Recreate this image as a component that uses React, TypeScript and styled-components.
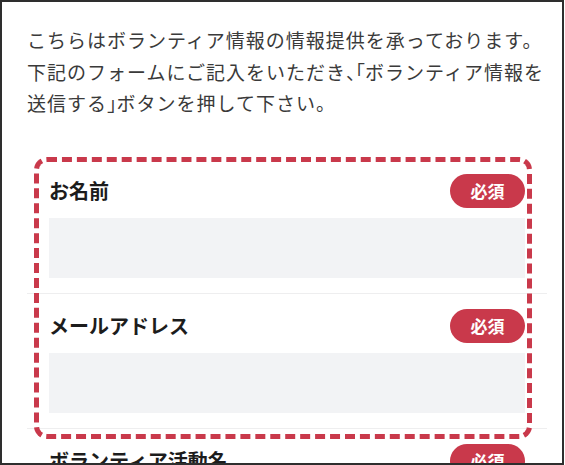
import React from 'react';
import styled, { createGlobalStyle } from 'styled-components';

const GlobalStyle = createGlobalStyle`
  html, body {
    margin: 0;
    padding: 0;
    background: #ffffff;
  }
  body {
    font-family: "Noto Sans CJK JP", "Noto Sans", sans-serif;
  }
`;

type Field = {
  id: string;
  label: string;
  required: boolean;
};

const highlighted: Field[] = [
  { id: 'name', label: 'お名前', required: true },
  { id: 'email', label: 'メールアドレス', required: true },
];

const rest: Field[] = [
  { id: 'activity', label: 'ボランティア活動名', required: true },
];

const FormRow = ({ field }: { field: Field }) => (
  <Row>
    <RowHeader>
      <Label htmlFor={field.id}>{field.label}</Label>
      {field.required && <Badge>必須</Badge>}
    </RowHeader>
    <Input id={field.id} type="text" />
  </Row>
);

export default function App() {
  return (
    <>
      <GlobalStyle />
      <Frame>
        <Intro>
          こちらはボランティア情報の情報提供を承っております。
          <br />
          下記のフォームにご記入をいただき<Half>、「</Half>ボランティア情報を
          <br />
          送信する<Half>」</Half>ボタンを押して下さい。
        </Intro>
        <Form>
          <Highlight>
            {highlighted.map((f) => (
              <FormRow key={f.id} field={f} />
            ))}
          </Highlight>
          {rest.map((f) => (
            <FormRow key={f.id} field={f} />
          ))}
        </Form>
      </Frame>
    </>
  );
}

const Frame = styled.div`
  box-sizing: border-box;
  width: 564px;
  height: 465px;
  border: 2px solid #2e2e2e;
  padding: 22px 15px 0 25px;
  overflow: hidden;
  background: #fff;
`;

const Intro = styled.p`
  margin: 0 0 40px;
  font-size: 19px;
  letter-spacing: 1px;
  line-height: 31.5px;
  color: #3a3a3a;
`;

const Half = styled.span`
  font-feature-settings: 'halt';
  letter-spacing: 0;
`;

const Form = styled.div`
  display: flex;
  flex-direction: column;
`;

const Highlight = styled.div`
  position: relative;
  &::after {
    content: '';
    position: absolute;
    top: -2px;
    left: 7px;
    right: 15px;
    bottom: -10px;
    border: 5px dashed #c9394b;
    border-radius: 13px;
    pointer-events: none;
  }
`;

const Row = styled.div`
  display: flex;
  flex-direction: column;
  gap: 10px;
  padding: 15px 22px 15px 22px;
  border-bottom: 1px solid #eeeeef;
`;

const RowHeader = styled.div`
  display: flex;
  align-items: center;
  justify-content: space-between;
  height: 34px;
`;

const Label = styled.label`
  font-size: 20px;
  font-weight: 700;
  color: #1c1c1c;
`;

const Badge = styled.span`
  display: inline-flex;
  align-items: center;
  justify-content: center;
  width: 75px;
  height: 34px;
  border-radius: 17px;
  background: #c9394b;
  color: #fff;
  font-size: 17px;
  font-weight: 700;
`;

const Input = styled.input`
  box-sizing: border-box;
  width: 100%;
  height: 60px;
  border: none;
  background: #f2f3f5;
  margin: 0;
  padding: 0 12px;
  font-size: 18px;
  outline: none;
`;
